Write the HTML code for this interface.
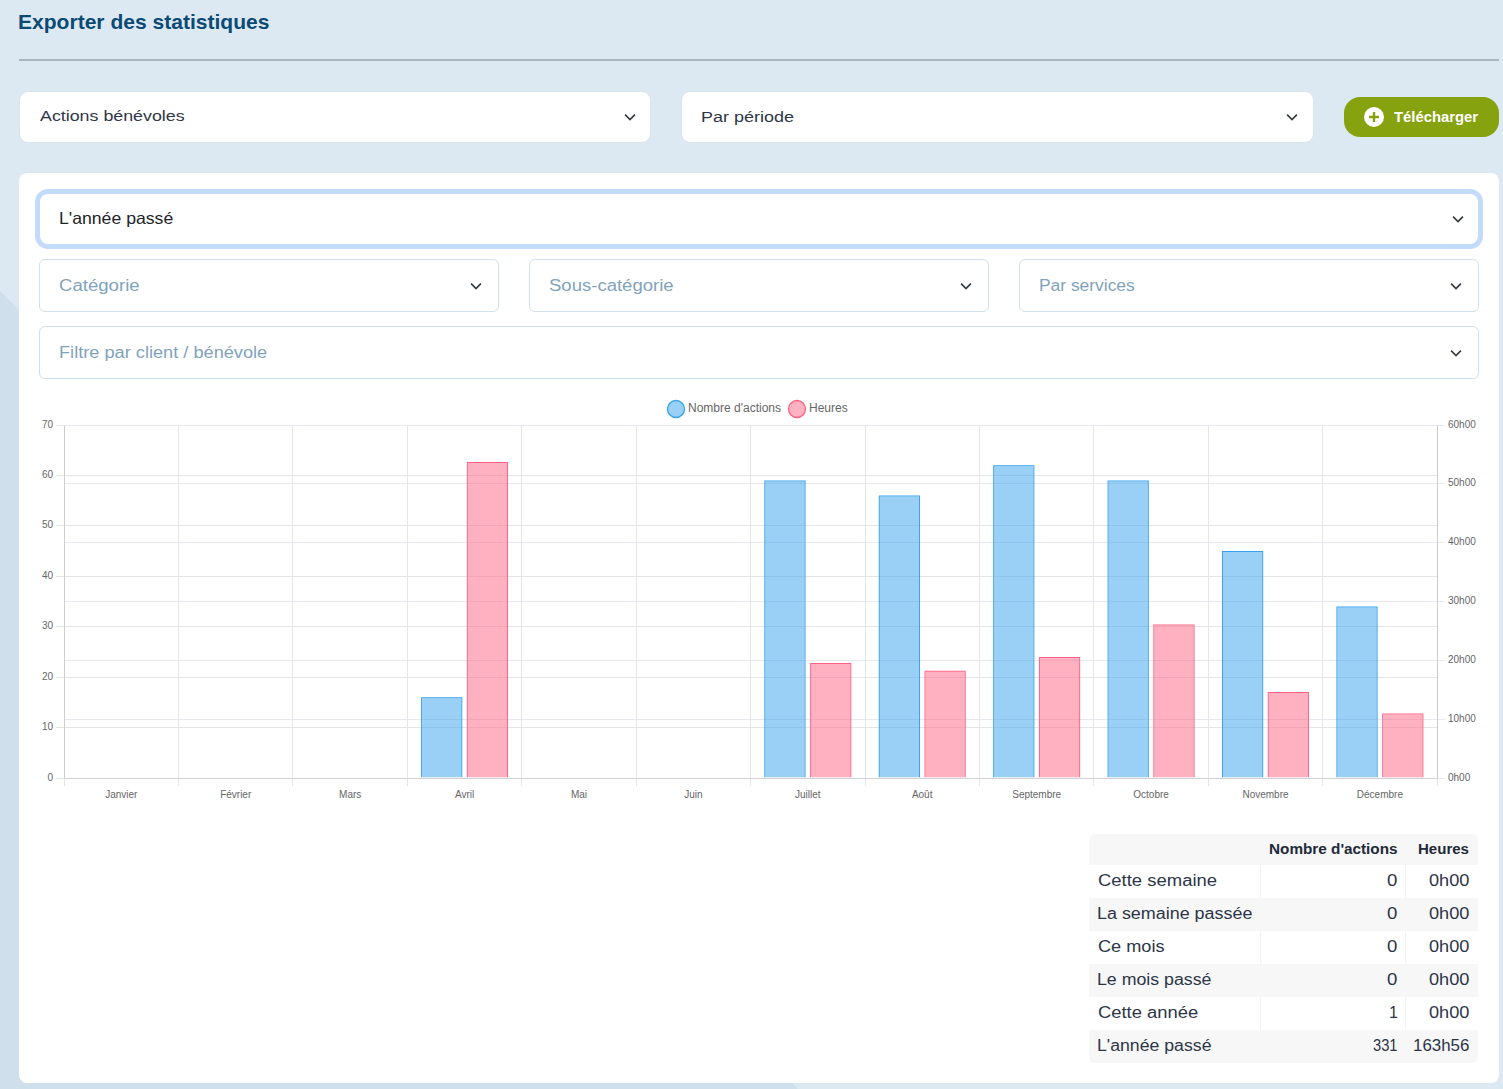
<!DOCTYPE html>
<html><head><meta charset="utf-8">
<style>
*{box-sizing:border-box;margin:0;padding:0}
html,body{width:1503px;height:1089px;overflow:hidden}
body{position:relative;background:#dde9f2;font-family:"Liberation Sans",sans-serif}
.abs{position:absolute}
.tx{position:absolute;white-space:nowrap;transform-origin:0 0}
.sel{position:absolute;background:#fff;border:1px solid #d3e1ec;border-radius:9px}
.yl{position:absolute;left:0;width:53px;text-align:right;font-size:10px;line-height:12px;color:#666}
.yr{position:absolute;left:1448px;font-size:10px;line-height:12px;color:#666}
.xl{position:absolute;top:788.5px;width:100px;text-align:center;font-size:10px;line-height:12px;color:#666}
.leg{position:absolute;top:401px;font-size:12px;line-height:14px;color:#666;white-space:nowrap}
</style></head><body>
<svg class="abs" style="left:0;top:0" width="1503" height="1089"><polygon points="0,291 0,1089 798,1089" fill="#cfe0ec"/></svg>
<div class="abs" style="left:19px;top:59px;width:1480px;height:2px;background:#aab5be"></div>

<div class="sel" style="left:19px;top:91px;width:632px;height:52px;border-color:#d8e5ef"></div>
<svg class="abs" style="left:624px;top:113px" width="12" height="8" viewBox="0 0 12 8"><path d="M1.1 1.6l4.9 4.9 4.9-4.9" fill="none" stroke="#343a40" stroke-width="1.65" stroke-linecap="butt" stroke-linejoin="miter"/></svg>
<div class="sel" style="left:681px;top:91px;width:633px;height:52px;border-color:#d8e5ef"></div>
<svg class="abs" style="left:1286px;top:113px" width="12" height="8" viewBox="0 0 12 8"><path d="M1.1 1.6l4.9 4.9 4.9-4.9" fill="none" stroke="#343a40" stroke-width="1.65" stroke-linecap="butt" stroke-linejoin="miter"/></svg>
<div class="abs" style="left:1344px;top:97px;width:155px;height:40px;background:#87a20f;border-radius:16px"></div>
<svg class="abs" style="left:1364px;top:107px" width="20" height="20" viewBox="0 0 20 20"><circle cx="10" cy="10" r="10" fill="#fff"/><path d="M10 5v10M5 10h10" stroke="#87a20f" stroke-width="2.4"/></svg>

<div class="abs" style="left:19px;top:173px;width:1480px;height:910px;background:#fff;border-radius:8px"></div>
<div class="abs" style="left:35px;top:189px;width:1448px;height:60px;border-radius:13px;background:#c3dbfa"></div>
<div class="abs" style="left:40px;top:194px;width:1438px;height:50px;border-radius:8px;background:#fff"></div>
<svg class="abs" style="left:1452px;top:215px" width="12" height="8" viewBox="0 0 12 8"><path d="M1.1 1.6l4.9 4.9 4.9-4.9" fill="none" stroke="#343a40" stroke-width="1.65" stroke-linecap="butt" stroke-linejoin="miter"/></svg>

<div class="sel" style="left:39px;top:259px;width:460px;height:53px;border-color:#cfe0ec;border-radius:6px"></div>
<svg class="abs" style="left:470px;top:282px" width="12" height="8" viewBox="0 0 12 8"><path d="M1.1 1.6l4.9 4.9 4.9-4.9" fill="none" stroke="#343a40" stroke-width="1.65" stroke-linecap="butt" stroke-linejoin="miter"/></svg>
<div class="sel" style="left:529px;top:259px;width:460px;height:53px;border-color:#cfe0ec;border-radius:6px"></div>
<svg class="abs" style="left:960px;top:282px" width="12" height="8" viewBox="0 0 12 8"><path d="M1.1 1.6l4.9 4.9 4.9-4.9" fill="none" stroke="#343a40" stroke-width="1.65" stroke-linecap="butt" stroke-linejoin="miter"/></svg>
<div class="sel" style="left:1019px;top:259px;width:460px;height:53px;border-color:#cfe0ec;border-radius:6px"></div>
<svg class="abs" style="left:1450px;top:282px" width="12" height="8" viewBox="0 0 12 8"><path d="M1.1 1.6l4.9 4.9 4.9-4.9" fill="none" stroke="#343a40" stroke-width="1.65" stroke-linecap="butt" stroke-linejoin="miter"/></svg>
<div class="sel" style="left:39px;top:326px;width:1440px;height:53px;border-color:#cfe0ec;border-radius:6px"></div>
<svg class="abs" style="left:1450px;top:349px" width="12" height="8" viewBox="0 0 12 8"><path d="M1.1 1.6l4.9 4.9 4.9-4.9" fill="none" stroke="#343a40" stroke-width="1.65" stroke-linecap="butt" stroke-linejoin="miter"/></svg>

<svg class="abs" style="left:0;top:0" width="1503" height="1089">
<circle cx="676" cy="409" r="8.5" fill="rgba(54,162,235,0.5)" stroke="rgb(54,162,235)" stroke-width="1.3"/>
<circle cx="797" cy="409" r="8.5" fill="rgba(255,99,132,0.5)" stroke="rgb(255,99,132)" stroke-width="1.3"/>
<line x1="56" y1="425.5" x2="1437.5" y2="425.5" stroke="#e6e6e6"/>
<line x1="56" y1="475.5" x2="1437.5" y2="475.5" stroke="#e6e6e6"/>
<line x1="56" y1="525.5" x2="1437.5" y2="525.5" stroke="#e6e6e6"/>
<line x1="56" y1="576.5" x2="1437.5" y2="576.5" stroke="#e6e6e6"/>
<line x1="56" y1="626.5" x2="1437.5" y2="626.5" stroke="#e6e6e6"/>
<line x1="56" y1="677.5" x2="1437.5" y2="677.5" stroke="#e6e6e6"/>
<line x1="56" y1="727.5" x2="1437.5" y2="727.5" stroke="#e6e6e6"/>
<line x1="56" y1="778.5" x2="1437.5" y2="778.5" stroke="#e6e6e6"/>
<line x1="64.5" y1="425.5" x2="1445" y2="425.5" stroke="#e9e8ef"/>
<line x1="64.5" y1="483.5" x2="1445" y2="483.5" stroke="#e9e8ef"/>
<line x1="64.5" y1="542.5" x2="1445" y2="542.5" stroke="#e9e8ef"/>
<line x1="64.5" y1="601.5" x2="1445" y2="601.5" stroke="#e9e8ef"/>
<line x1="64.5" y1="660.5" x2="1445" y2="660.5" stroke="#e9e8ef"/>
<line x1="64.5" y1="719.5" x2="1445" y2="719.5" stroke="#e9e8ef"/>
<line x1="64.5" y1="778.5" x2="1445" y2="778.5" stroke="#e9e8ef"/>
<line x1="64.5" y1="425.5" x2="64.5" y2="786" stroke="#e6e6e6"/>
<line x1="178.5" y1="425.5" x2="178.5" y2="786" stroke="#e6e6e6"/>
<line x1="292.5" y1="425.5" x2="292.5" y2="786" stroke="#e6e6e6"/>
<line x1="407.5" y1="425.5" x2="407.5" y2="786" stroke="#e6e6e6"/>
<line x1="521.5" y1="425.5" x2="521.5" y2="786" stroke="#e6e6e6"/>
<line x1="636.5" y1="425.5" x2="636.5" y2="786" stroke="#e6e6e6"/>
<line x1="750.5" y1="425.5" x2="750.5" y2="786" stroke="#e6e6e6"/>
<line x1="865.5" y1="425.5" x2="865.5" y2="786" stroke="#e6e6e6"/>
<line x1="979.5" y1="425.5" x2="979.5" y2="786" stroke="#e6e6e6"/>
<line x1="1093.5" y1="425.5" x2="1093.5" y2="786" stroke="#e6e6e6"/>
<line x1="1208.5" y1="425.5" x2="1208.5" y2="786" stroke="#e6e6e6"/>
<line x1="1322.5" y1="425.5" x2="1322.5" y2="786" stroke="#e6e6e6"/>
<line x1="1437.5" y1="425.5" x2="1437.5" y2="786" stroke="#e6e6e6"/>
<line x1="64.5" y1="425.5" x2="64.5" y2="778.5" stroke="#cdcdcd"/>
<line x1="1437.5" y1="425.5" x2="1437.5" y2="778.5" stroke="#cdcdcd"/>
<line x1="64.5" y1="778.5" x2="1437.5" y2="778.5" stroke="#d2d1d9"/>
<path d="M421.10,777.3V697.31H462.29V777.3ZM422.10,777.3V698.31H461.29V777.3Z" fill-rule="evenodd" fill="rgb(54,162,235)"/>
<path d="M422.10,777.3V698.31H461.29V777.3Z" fill="rgba(54,162,235,0.5)"/>
<path d="M466.87,777.3V462.00H508.06V777.3ZM467.87,777.3V463.00H507.06V777.3Z" fill-rule="evenodd" fill="rgb(255,99,132)"/>
<path d="M467.87,777.3V463.00H507.06V777.3Z" fill="rgba(255,99,132,0.5)"/>
<path d="M764.35,777.3V480.47H805.54V777.3ZM765.35,777.3V481.47H804.54V777.3Z" fill-rule="evenodd" fill="rgb(54,162,235)"/>
<path d="M765.35,777.3V481.47H804.54V777.3Z" fill="rgba(54,162,235,0.5)"/>
<path d="M810.12,777.3V663.00H851.31V777.3ZM811.12,777.3V664.00H850.31V777.3Z" fill-rule="evenodd" fill="rgb(255,99,132)"/>
<path d="M811.12,777.3V664.00H850.31V777.3Z" fill="rgba(255,99,132,0.5)"/>
<path d="M878.77,777.3V495.60H919.96V777.3ZM879.77,777.3V496.60H918.96V777.3Z" fill-rule="evenodd" fill="rgb(54,162,235)"/>
<path d="M879.77,777.3V496.60H918.96V777.3Z" fill="rgba(54,162,235,0.5)"/>
<path d="M924.53,777.3V670.80H965.72V777.3ZM925.53,777.3V671.80H964.72V777.3Z" fill-rule="evenodd" fill="rgb(255,99,132)"/>
<path d="M925.53,777.3V671.80H964.72V777.3Z" fill="rgba(255,99,132,0.5)"/>
<path d="M993.18,777.3V465.34H1034.37V777.3ZM994.18,777.3V466.34H1033.37V777.3Z" fill-rule="evenodd" fill="rgb(54,162,235)"/>
<path d="M994.18,777.3V466.34H1033.37V777.3Z" fill="rgba(54,162,235,0.5)"/>
<path d="M1038.95,777.3V657.00H1080.14V777.3ZM1039.95,777.3V658.00H1079.14V777.3Z" fill-rule="evenodd" fill="rgb(255,99,132)"/>
<path d="M1039.95,777.3V658.00H1079.14V777.3Z" fill="rgba(255,99,132,0.5)"/>
<path d="M1107.60,777.3V480.47H1148.79V777.3ZM1108.60,777.3V481.47H1147.79V777.3Z" fill-rule="evenodd" fill="rgb(54,162,235)"/>
<path d="M1108.60,777.3V481.47H1147.79V777.3Z" fill="rgba(54,162,235,0.5)"/>
<path d="M1153.37,777.3V624.60H1194.56V777.3ZM1154.37,777.3V625.60H1193.56V777.3Z" fill-rule="evenodd" fill="rgb(255,99,132)"/>
<path d="M1154.37,777.3V625.60H1193.56V777.3Z" fill="rgba(255,99,132,0.5)"/>
<path d="M1222.02,777.3V551.07H1263.21V777.3ZM1223.02,777.3V552.07H1262.21V777.3Z" fill-rule="evenodd" fill="rgb(54,162,235)"/>
<path d="M1223.02,777.3V552.07H1262.21V777.3Z" fill="rgba(54,162,235,0.5)"/>
<path d="M1267.78,777.3V692.00H1308.97V777.3ZM1268.78,777.3V693.00H1307.97V777.3Z" fill-rule="evenodd" fill="rgb(255,99,132)"/>
<path d="M1268.78,777.3V693.00H1307.97V777.3Z" fill="rgba(255,99,132,0.5)"/>
<path d="M1336.43,777.3V606.54H1377.62V777.3ZM1337.43,777.3V607.54H1376.62V777.3Z" fill-rule="evenodd" fill="rgb(54,162,235)"/>
<path d="M1337.43,777.3V607.54H1376.62V777.3Z" fill="rgba(54,162,235,0.5)"/>
<path d="M1382.20,777.3V713.60H1423.39V777.3ZM1383.20,777.3V714.60H1422.39V777.3Z" fill-rule="evenodd" fill="rgb(255,99,132)"/>
<path d="M1383.20,777.3V714.60H1422.39V777.3Z" fill="rgba(255,99,132,0.5)"/>
</svg>
<div class="leg" style="left:688px">Nombre d'actions</div>
<div class="leg" style="left:809px">Heures</div>
<div class="yl" style="top:419.0px">70</div><div class="yl" style="top:469.0px">60</div><div class="yl" style="top:519.0px">50</div><div class="yl" style="top:570.0px">40</div><div class="yl" style="top:620.0px">30</div><div class="yl" style="top:671.0px">20</div><div class="yl" style="top:721.0px">10</div><div class="yl" style="top:772.0px">0</div><div class="yr" style="top:419.0px">60h00</div><div class="yr" style="top:477.0px">50h00</div><div class="yr" style="top:536.0px">40h00</div><div class="yr" style="top:595.0px">30h00</div><div class="yr" style="top:654.0px">20h00</div><div class="yr" style="top:713.0px">10h00</div><div class="yr" style="top:772.0px">0h00</div><div class="xl" style="left:71.3px">Janvier</div><div class="xl" style="left:185.7px">Février</div><div class="xl" style="left:300.2px">Mars</div><div class="xl" style="left:414.6px">Avril</div><div class="xl" style="left:529.0px">Mai</div><div class="xl" style="left:643.4px">Juin</div><div class="xl" style="left:757.8px">Juillet</div><div class="xl" style="left:872.2px">Août</div><div class="xl" style="left:986.7px">Septembre</div><div class="xl" style="left:1101.1px">Octobre</div><div class="xl" style="left:1215.5px">Novembre</div><div class="xl" style="left:1329.9px">Décembre</div>

<div class="abs" style="left:1089px;top:834px;width:389px;height:229px;border-radius:6px;overflow:hidden">
<div class="abs" style="left:0;top:0;width:389px;height:31px;background:#f7f7f7"></div>
</div>
<div class="abs" style="left:1089px;top:865px;width:389px;height:33px;background:#fff;"></div><div class="abs" style="left:1089px;top:898px;width:389px;height:33px;background:#f7f7f7;"></div><div class="abs" style="left:1089px;top:931px;width:389px;height:33px;background:#fff;"></div><div class="abs" style="left:1089px;top:964px;width:389px;height:33px;background:#f7f7f7;"></div><div class="abs" style="left:1089px;top:997px;width:389px;height:33px;background:#fff;"></div><div class="abs" style="left:1089px;top:1030px;width:389px;height:33px;background:#f7f7f7;border-radius:0 0 6px 6px"></div>
<div class="abs" style="left:1260px;top:865px;width:1px;height:33px;background:#f3f3f3"></div><div class="abs" style="left:1405px;top:865px;width:1px;height:33px;background:#f3f3f3"></div><div class="abs" style="left:1260px;top:931px;width:1px;height:33px;background:#f3f3f3"></div><div class="abs" style="left:1405px;top:931px;width:1px;height:33px;background:#f3f3f3"></div><div class="abs" style="left:1260px;top:997px;width:1px;height:33px;background:#f3f3f3"></div><div class="abs" style="left:1405px;top:997px;width:1px;height:33px;background:#f3f3f3"></div>
<div class="tx" style="left:17.59px;top:7.99px;font-size:20.5px;line-height:27px;font-weight:bold;color:#0c4a76;transform:scaleX(1.0266)">Exporter des statistiques</div><div class="tx" style="left:40.40px;top:106.33px;font-size:15.5px;line-height:20px;font-weight:normal;color:#2e3648;transform:scaleX(1.1497)">Actions bénévoles</div><div class="tx" style="left:701.45px;top:106.73px;font-size:15.5px;line-height:20px;font-weight:normal;color:#2e3648;transform:scaleX(1.1591)">Par période</div><div class="tx" style="left:1394.08px;top:106.90px;font-size:15px;line-height:20px;font-weight:bold;color:#ffffff;transform:scaleX(0.9876)">Télécharger</div><div class="tx" style="left:58.72px;top:208.18px;font-size:16.5px;line-height:21px;font-weight:normal;color:#212529;transform:scaleX(1.0693)">L'année passé</div><div class="tx" style="left:59.13px;top:274.75px;font-size:16px;line-height:21px;font-weight:normal;color:#7fa3bd;transform:scaleX(1.1618)">Catégorie</div><div class="tx" style="left:549.23px;top:274.75px;font-size:16px;line-height:21px;font-weight:normal;color:#7fa3bd;transform:scaleX(1.1576)">Sous-catégorie</div><div class="tx" style="left:1039.04px;top:274.75px;font-size:16px;line-height:21px;font-weight:normal;color:#7fa3bd;transform:scaleX(1.0875)">Par services</div><div class="tx" style="left:58.98px;top:341.65px;font-size:16px;line-height:21px;font-weight:normal;color:#7fa3bd;transform:scaleX(1.1366)">Filtre par client / bénévole</div><div class="tx" style="left:1268.98px;top:839.57px;font-size:14.5px;line-height:19px;font-weight:bold;color:#222a38;transform:scaleX(1.0548)">Nombre d'actions</div><div class="tx" style="left:1418.49px;top:839.57px;font-size:14.5px;line-height:19px;font-weight:bold;color:#222a38;transform:scaleX(1.0366)">Heures</div><div class="tx" style="left:1097.73px;top:870.15px;font-size:16px;line-height:21px;font-weight:normal;color:#2c3547;transform:scaleX(1.1538)">Cette semaine</div><div class="tx" style="left:1387.27px;top:870.15px;font-size:16px;line-height:21px;font-weight:normal;color:#2c3547;transform:scaleX(1.1613)">0</div><div class="tx" style="left:1429.19px;top:870.15px;font-size:16px;line-height:21px;font-weight:normal;color:#2c3547;transform:scaleX(1.1345)">0h00</div><div class="tx" style="left:1097.20px;top:903.05px;font-size:16px;line-height:21px;font-weight:normal;color:#2c3547;transform:scaleX(1.1200)">La semaine passée</div><div class="tx" style="left:1387.27px;top:903.05px;font-size:16px;line-height:21px;font-weight:normal;color:#2c3547;transform:scaleX(1.1613)">0</div><div class="tx" style="left:1429.19px;top:903.05px;font-size:16px;line-height:21px;font-weight:normal;color:#2c3547;transform:scaleX(1.1345)">0h00</div><div class="tx" style="left:1097.75px;top:935.95px;font-size:16px;line-height:21px;font-weight:normal;color:#2c3547;transform:scaleX(1.1329)">Ce mois</div><div class="tx" style="left:1387.27px;top:935.95px;font-size:16px;line-height:21px;font-weight:normal;color:#2c3547;transform:scaleX(1.1613)">0</div><div class="tx" style="left:1429.19px;top:935.95px;font-size:16px;line-height:21px;font-weight:normal;color:#2c3547;transform:scaleX(1.1345)">0h00</div><div class="tx" style="left:1097.21px;top:968.85px;font-size:16px;line-height:21px;font-weight:normal;color:#2c3547;transform:scaleX(1.1091)">Le mois passé</div><div class="tx" style="left:1387.27px;top:968.85px;font-size:16px;line-height:21px;font-weight:normal;color:#2c3547;transform:scaleX(1.1613)">0</div><div class="tx" style="left:1429.19px;top:968.85px;font-size:16px;line-height:21px;font-weight:normal;color:#2c3547;transform:scaleX(1.1345)">0h00</div><div class="tx" style="left:1097.74px;top:1001.75px;font-size:16px;line-height:21px;font-weight:normal;color:#2c3547;transform:scaleX(1.1487)">Cette année</div><div class="tx" style="left:1388.88px;top:1001.75px;font-size:16px;line-height:21px;font-weight:normal;color:#2c3547;transform:scaleX(1.0000)">1</div><div class="tx" style="left:1429.19px;top:1001.75px;font-size:16px;line-height:21px;font-weight:normal;color:#2c3547;transform:scaleX(1.1345)">0h00</div><div class="tx" style="left:1097.22px;top:1034.65px;font-size:16px;line-height:21px;font-weight:normal;color:#2c3547;transform:scaleX(1.1050)">L'année passé</div><div class="tx" style="left:1373.08px;top:1034.65px;font-size:16px;line-height:21px;font-weight:normal;color:#2c3547;transform:scaleX(0.9200)">331</div><div class="tx" style="left:1413.21px;top:1034.65px;font-size:16px;line-height:21px;font-weight:normal;color:#2c3547;transform:scaleX(1.0557)">163h56</div>
</body></html>
